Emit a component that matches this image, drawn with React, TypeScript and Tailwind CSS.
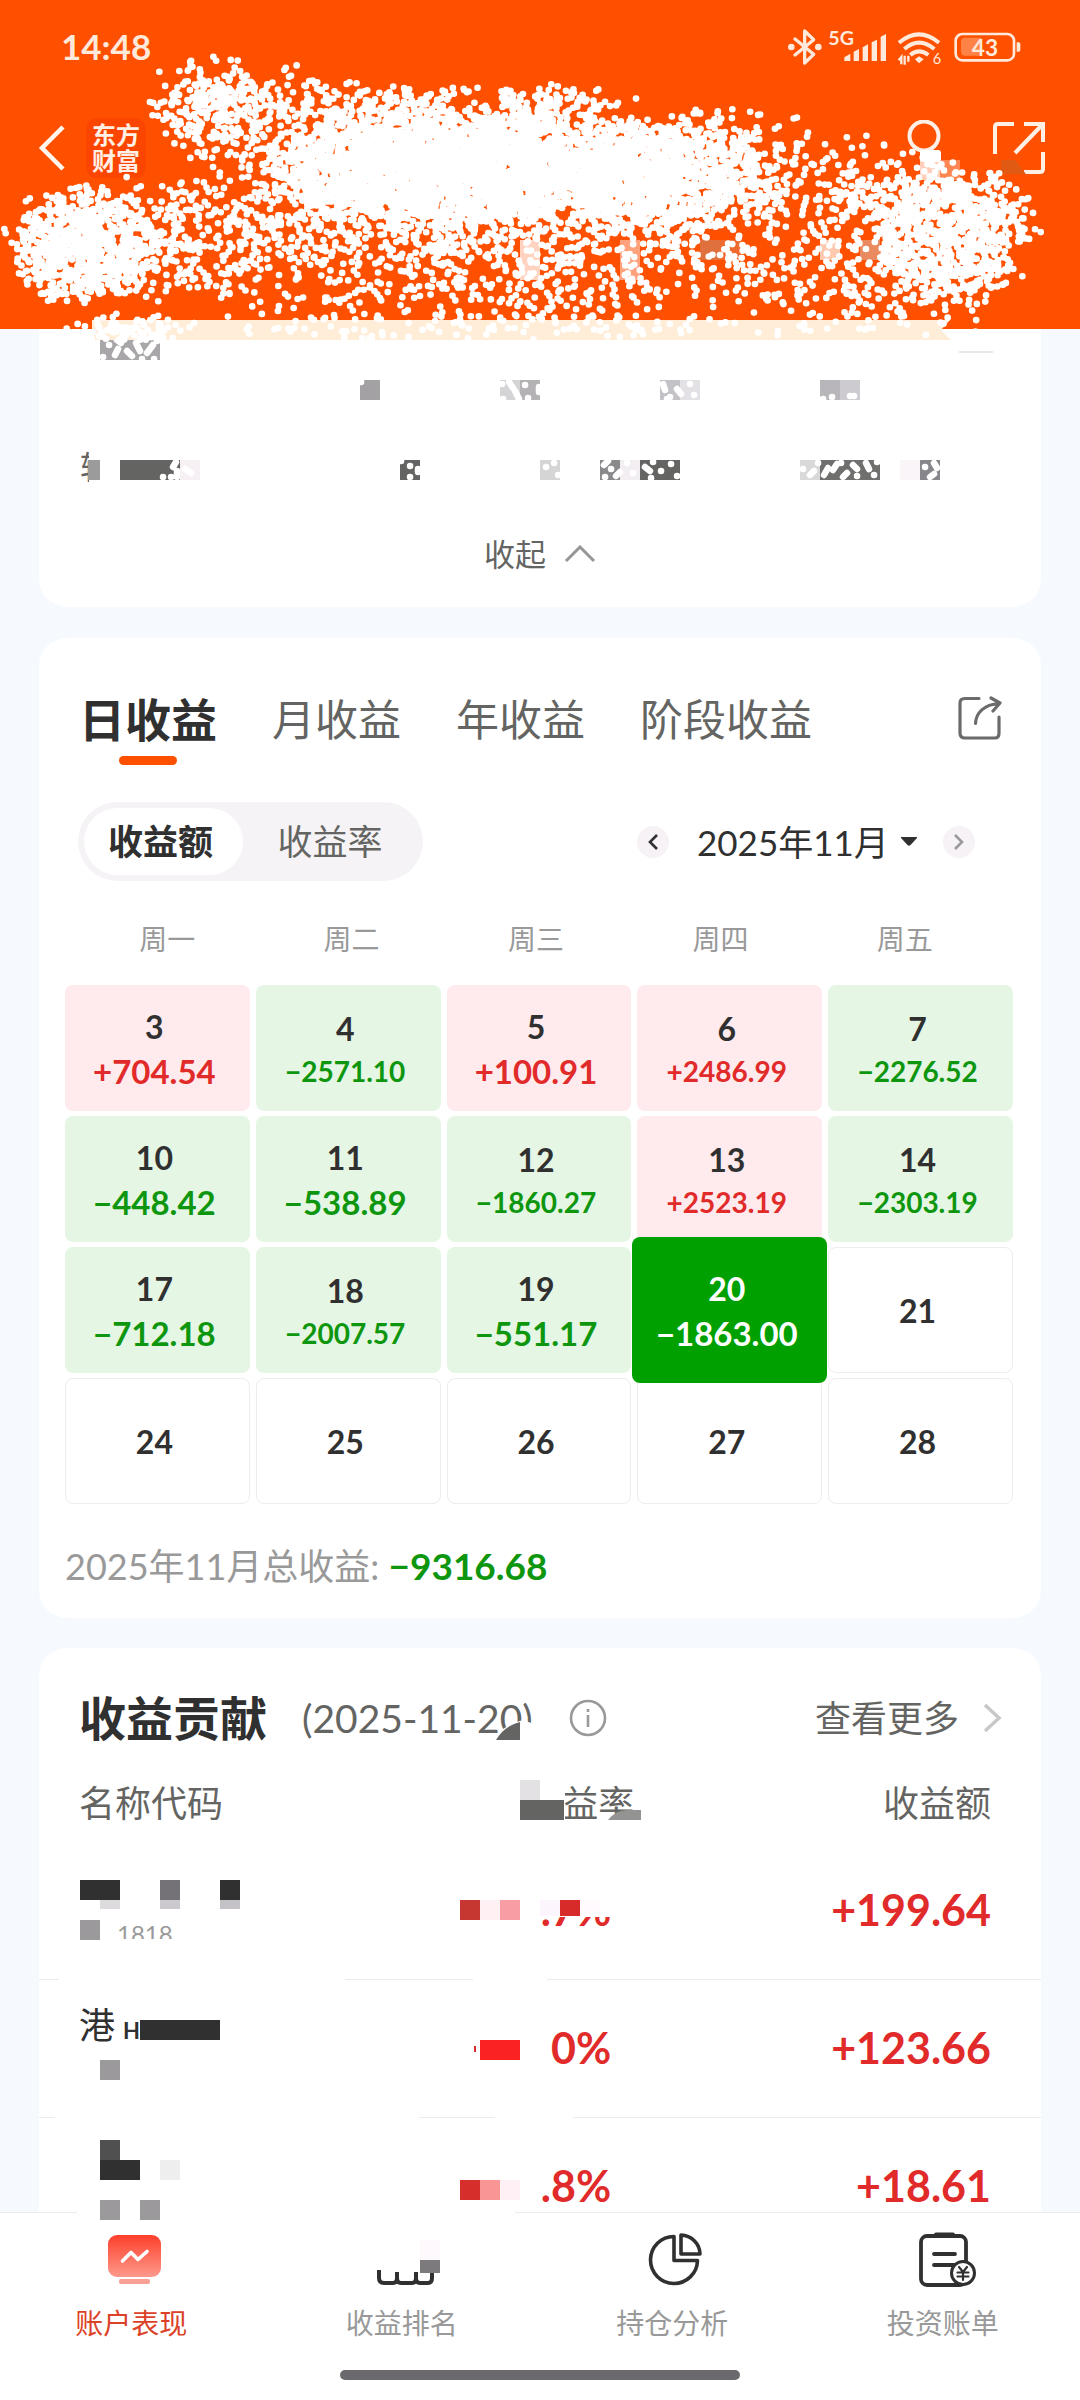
import { useState } from "react";
import clsx from "clsx";

type Block = [x: number, y: number, w: number, h: number, fill: string];

type Day = { day: number; amount?: string };

const DAYS: Day[] = [
  { day: 3, amount: "+704.54" },
  { day: 4, amount: "−2571.10" },
  { day: 5, amount: "+100.91" },
  { day: 6, amount: "+2486.99" },
  { day: 7, amount: "−2276.52" },
  { day: 10, amount: "−448.42" },
  { day: 11, amount: "−538.89" },
  { day: 12, amount: "−1860.27" },
  { day: 13, amount: "+2523.19" },
  { day: 14, amount: "−2303.19" },
  { day: 17, amount: "−712.18" },
  { day: 18, amount: "−2007.57" },
  { day: 19, amount: "−551.17" },
  { day: 20, amount: "−1863.00" },
  { day: 21 },
  { day: 24 },
  { day: 25 },
  { day: 26 },
  { day: 27 },
  { day: 28 },
];

const WEEKDAYS = ["周一", "周二", "周三", "周四", "周五"];
const PERIODS = ["日收益", "月收益", "年收益", "阶段收益"];
const MODES = ["收益额", "收益率"];

// Spray clusters: centre, radii, number of dots
const CLUSTERS = [
  [208, 98, 60, 40, 150],
  [225, 128, 58, 44, 150],
  [270, 95, 90, 28, 80],
  [370, 108, 100, 26, 130],
  [470, 118, 110, 30, 150],
  [565, 108, 72, 24, 110],
  [350, 165, 95, 56, 850],
  [440, 168, 150, 56, 1400],
  [540, 168, 150, 52, 1400],
  [660, 178, 112, 52, 1250],
  [720, 140, 90, 34, 110],
  [850, 190, 100, 50, 190],
  [82, 245, 72, 54, 800],
  [180, 235, 120, 56, 340],
  [380, 225, 150, 44, 340],
  [560, 230, 180, 42, 260],
  [400, 280, 280, 50, 270],
  [640, 285, 260, 50, 230],
  [780, 235, 150, 60, 150],
  [950, 235, 82, 64, 850],
  [930, 190, 50, 20, 70],
  [880, 290, 110, 44, 110],
  [128, 330, 46, 16, 90],
  [500, 330, 440, 14, 90],
];

const spray = (() => {
  let seed = 20251120;
  const rand = () => {
    seed = (seed * 1664525 + 1013904223) % 4294967296;
    return seed / 4294967296;
  };
  let d = "";
  for (const [cx, cy, rx, ry, n] of CLUSTERS) {
    for (let i = 0; i < n; i++) {
      const a = rand() * Math.PI * 2;
      const r = Math.pow(rand(), 0.58) * (0.7 + rand() * 0.5);
      const x = cx + Math.cos(a) * r * rx;
      const y = cy + Math.sin(a) * r * ry;
      if (y < 340) d += `M${x.toFixed(1)} ${y.toFixed(1)}h.1`;
    }
  }
  return d;
})();

const HEADER_BLOCKS: Block[] = [
  [520, 240, 20, 40, "#ffd3bf"],
  [620, 240, 20, 40, "#ffa27c"],
  [700, 240, 20, 20, "#e0713f"],
  [720, 240, 20, 20, "#f06a30"],
  [820, 240, 20, 20, "#ffc9b0"],
  [860, 240, 20, 20, "#e98a61"],
  [920, 160, 20, 20, "#ffcdb8"],
  [940, 160, 20, 20, "#ff8652"],
];

const SUMMARY_BLOCKS: Block[] = [
  [50, 118, 30, 44, "#ffffff"],
  [61, 11, 60, 20, "#a8a6a8"],
  [321, 51, 20, 20, "#a3a1a3"],
  [461, 51, 20, 20, "#d4d3d5"],
  [481, 51, 20, 20, "#b5b2b5"],
  [621, 51, 20, 20, "#c4c2c6"],
  [641, 51, 20, 20, "#e3e1e5"],
  [781, 51, 20, 20, "#b8b6ba"],
  [801, 51, 20, 20, "#cdcbcf"],
  [920, 22, 34, 2, "#e8e8e8"],
  [49, 131, 12, 20, "#9b9b9b"],
  [81, 131, 60, 20, "#646562"],
  [141, 131, 20, 20, "#f6f0f5"],
  [361, 131, 20, 20, "#646562"],
  [501, 131, 20, 20, "#d5d5d5"],
  [561, 131, 20, 20, "#8a898b"],
  [581, 131, 20, 20, "#f3eef2"],
  [601, 131, 40, 20, "#646562"],
  [761, 131, 20, 20, "#d9d9d9"],
  [781, 131, 60, 20, "#6f6f6e"],
  [861, 131, 20, 20, "#faf5f8"],
  [881, 131, 20, 20, "#87868a"],
];

// Points rubbed out of the summary blocks, relative to the card
const SUMMARY_RUBS =
  "M64 28h.1M76 26l3-6M88 22l5 5M97 14l4 8M108 24l6-8M115 30h.1M82 14l-4-3M70 16h.1M103 30h.1M118 12h.1M322 53h.1M463 55h.1M470 53l4 6M476 62l4 8M486 56h.1M489 69h.1M500 58v5M464 70h.1M624 55l2 6M631 68h.1M638 60l4 5M628 70h.1M651 55h.1M655 66h.1M784 70h.1M793 68h.1M811 67h.1M815 67h.1M132 148h.1M124 148h.1M137 133l-3 5M138 142v6M146 140l6 4M371 137h.1M371 148h.1M379 140v3M362 132h.1M507 138h.1M515 134h.1M519 146h.1M565 136l4-4M572 140h.1M566 148h.1M577 147l4-4M588 134h.1M594 144h.1M606 138l5 4M614 133h.1M622 142h.1M632 135h.1M612 149h.1M638 147h.1M764 140h.1M771 146l4-4M779 134h.1M785 146l4-7M794 141l4-6M804 148l4-4M802 134h.1M814 136l4 4M818 147h.1M827 134l3 6M835 146h.1M838 133h.1M886 138h.1M895 134l3 5M891 148l4-3";

const CONTRIB_BLOCKS: Block[] = [
  [458, 130, 68, 44, "#ffffff"],
  [481, 132, 20, 20, "#e4e1e5"],
  [481, 152, 44, 20, "#646562"],
  [41, 232, 40, 20, "#303030"],
  [121, 232, 20, 20, "#747276"],
  [181, 232, 20, 20, "#303030"],
  [61, 252, 20, 9, "#dedbdf"],
  [121, 252, 20, 9, "#cbc9cd"],
  [181, 252, 20, 9, "#c4c2c6"],
  [41, 272, 20, 20, "#9c999c"],
  [74, 291, 66, 8, "#ffffff"],
  [500, 236, 76, 33, "#ffffff"],
  [421, 252, 20, 20, "#c63732"],
  [441, 252, 20, 20, "#fff1f3"],
  [461, 252, 20, 20, "#f89da4"],
  [501, 252, 20, 16, "#fdf5fd"],
  [521, 252, 20, 16, "#d62b29"],
  [541, 252, 20, 14, "#fffafe"],
  [101, 372, 80, 20, "#303030"],
  [61, 412, 20, 20, "#9c999c"],
  [435, 398, 2, 6, "#d9302e"],
  [441, 392, 40, 20, "#fa2222"],
  [61, 492, 20, 20, "#505050"],
  [61, 512, 40, 20, "#303030"],
  [121, 512, 20, 20, "#eeeeee"],
  [421, 532, 20, 20, "#d62f2b"],
  [441, 532, 20, 20, "#f99595"],
  [461, 532, 20, 20, "#fff0f5"],
  [20, 329, 286, 4, "#ffffff"],
  [434, 329, 74, 4, "#ffffff"],
  [16, 467, 364, 4, "#ffffff"],
  [456, 467, 78, 4, "#ffffff"],
];

const HOLDINGS = [
  { code: "1818", rate: ".7%", amount: "+199.64" },
  { name: "港", tail: "H", rate: "0%", amount: "+123.66" },
  { rate: ".8%", amount: "+18.61" },
];

export default function App() {
  return (
    <div className="flex h-screen min-h-[600px] flex-col overflow-hidden bg-[#f6faff] font-[Lato,'Noto_Sans_CJK_SC',sans-serif] text-[#303030]">
      <Header />
      <main className="min-h-0 flex-1 overflow-y-auto px-[39px] [scrollbar-width:none]">
        <SummaryCard />
        <CalendarCard />
        <ContributionCard />
      </main>
      <BottomNav />
    </div>
  );
}

function Blocks({ items }: { items: Block[] }) {
  return (
    <>
      {items.map(([x, y, w, h, fill]) => (
        <rect key={`${x}-${y}-${w}`} x={x} y={y} width={w} height={h} fill={fill} />
      ))}
    </>
  );
}

function Header() {
  return (
    <header className="relative z-10 h-[329px] shrink-0 bg-[#ff5000] text-white">
      <StatusBar />
      <div className="flex h-[112px] items-center pr-[35px] pl-[37px]">
        <button type="button" aria-label="返回">
          <svg width="30" height="48" viewBox="0 0 30 48" fill="none" stroke="#fff6f0" strokeWidth="4.5">
            <path d="M26 3 5 24l21 21" />
          </svg>
        </button>
        <div className="ml-[19px] flex h-[60px] w-[60px] flex-col items-center justify-center rounded-[10px] bg-[#fc4600] text-[24px] leading-[26px] font-bold text-[#fff0e6]">
          <span>东方</span>
          <span>财富</span>
        </div>
        <button type="button" aria-label="客服" className="ml-auto">
          <svg width="34" height="56" viewBox="0 0 34 56" fill="none">
            <circle cx="17" cy="16" r="14.5" stroke="#ffefe6" strokeWidth="4" />
          </svg>
        </button>
        <button type="button" aria-label="分享" className="ml-[52px]">
          <svg width="52" height="52" viewBox="0 0 52 52" fill="none" stroke="#fff0e6" strokeWidth="4">
            <path d="M2 32V5q0-3 3-3h16M31 2h19v18M49 3 22 31M50 30v17q0 3-3 3H31" />
            <path d="M8 38h14l14 18H8z" fill="#e05a14" stroke="none" />
          </svg>
        </button>
      </div>
      <svg viewBox="0 0 1080 346" className="pointer-events-none absolute top-0 left-0 w-full" aria-hidden="true">
        <path d="M92 320h858l-9 10 10 10H92z" fill="#ffedd8" />
        <Blocks items={HEADER_BLOCKS} />
        <path d={spray} stroke="#fff" strokeWidth="6.6" strokeLinecap="round" />
        <rect x="920" y="150" width="21" height="12" rx="3" fill="#fff" />
      </svg>
    </header>
  );
}

function StatusBar() {
  return (
    <div className="flex h-[92px] items-center justify-between pr-[58px] pl-[61px] text-[#ffe9da]">
      <time className="text-[35px] leading-[40px] font-bold">14:48</time>
      <div className="flex items-center gap-[5px]">
        <svg width="36" height="39" viewBox="80 46 108 117" fill="none" stroke="currentColor" strokeWidth="10" strokeLinejoin="round" strokeLinecap="round">
          <path d="m104 82 56 46-27 26V58l27 26-56 46" />
          <circle cx="93" cy="106" r="5" fill="currentColor" />
          <circle cx="174" cy="106" r="5" fill="currentColor" />
        </svg>
        <svg width="64" height="39" viewBox="203 46 192 117" fill="currentColor">
          <text x="204" y="101" fontSize="59" fontWeight="700">
            5G
          </text>
          <path d="m252 137 18-11v22h-18zM280 120l16-8v36h-16zM307 107l16-9v50h-16zM334 92l16-8v64h-16zM361 75l16-8v81h-16z" />
        </svg>
        <svg width="51" height="39" viewBox="410 46 153 117" fill="none" stroke="currentColor" strokeWidth="12">
          <path d="M416 93q60-50 120 0M432 112q44-38 90 0M450 130q26-22 54 0" />
          <path d="m464 143 12-9 14 9-14 12z" fill="currentColor" stroke="none" />
          <path d="M423 158v-22l-8 10M433 132v27M444 132v18" strokeWidth="7" />
          <text x="517" y="156" fontSize="44" fill="currentColor" stroke="none">
            6
          </text>
        </svg>
        <svg width="69" height="39" viewBox="578 46 207 117">
          <rect x="586" y="67" width="175" height="79" rx="20" fill="none" stroke="currentColor" strokeWidth="8" />
          <path d="M614 78h49v54h-49q-12 0-12-12V90q0-12 12-12z" fill="#ff8247" />
          <path d="M769 92h6q5 0 5 6v16q0 6-5 6h-6z" fill="currentColor" />
          <text x="674" y="132" fontSize="68" fontWeight="700" textAnchor="middle" fill="currentColor">
            43
          </text>
        </svg>
      </div>
    </div>
  );
}

function SummaryCard() {
  return (
    <section className="relative flex h-[278px] flex-col rounded-b-[28px] bg-white">
      <div className="mt-[118px] ml-[41px] text-[32px] leading-[40px] text-[#646562]">转</div>
      <button type="button" className="mx-auto mt-[43px] flex items-center gap-[18px] text-[31px] leading-[48px] text-[#646562]">
        收起
        <svg width="32" height="18" viewBox="0 0 32 18" fill="none" stroke="#969696" strokeWidth="3">
          <path d="M2 16 16 2l14 14" />
        </svg>
      </button>
      <svg viewBox="0 0 1002 278" className="pointer-events-none absolute top-0 left-0 w-full" aria-hidden="true">
        <Blocks items={SUMMARY_BLOCKS} />
        <path d={SUMMARY_RUBS} stroke="#fff" strokeWidth="6.5" strokeLinecap="round" fill="none" />
      </svg>
    </section>
  );
}

function CalendarCard() {
  const [period, setPeriod] = useState(PERIODS[0]);
  const [mode, setMode] = useState(MODES[0]);
  const [selected, setSelected] = useState(20);

  return (
    <section className="mt-[31px] rounded-[28px] bg-white pt-[48px] pb-[26px]">
      <div className="flex h-[79px] items-start gap-[55px] pr-[39px] pl-[40px]">
        {PERIODS.map((p) => (
          <button
            key={p}
            type="button"
            onClick={() => setPeriod(p)}
            className={clsx(
              "flex flex-col items-center gap-[2px] leading-[68px]",
              p === period ? "text-[46px] font-bold" : "text-[43px] text-[#646562]",
            )}
          >
            {p}
            {p === period && <span className="h-[9px] w-[58px] rounded-full bg-[#ff5000]" />}
          </button>
        ))}
        <button type="button" aria-label="分享收益" className="mt-[10px] ml-auto">
          <svg width="44" height="44" viewBox="0 0 44 44" fill="none" stroke="#6b6b6b" strokeWidth="3.2" strokeLinecap="round" strokeLinejoin="round">
            <path d="M21 2.5H7Q2 2.5 2 7v30q0 5 5 5h30q4 0 4-5V21M17.5 27.5C18 17 26 8.5 41 7.5M33 2l9 5-7 8" />
          </svg>
        </button>
      </div>

      <div className="mt-[37px] flex items-center justify-between pr-[66px] pl-[39px]">
        <div className="flex h-[79px] items-center rounded-full bg-[#f6f3f7] px-[6px]">
          {MODES.map((m) => (
            <button
              key={m}
              type="button"
              onClick={() => setMode(m)}
              className={clsx(
                "h-[67px] rounded-full text-[35px]",
                m === mode ? "w-[159px] bg-white pr-[6px] font-bold" : "w-[174px] text-[#646562]",
              )}
            >
              {m}
            </button>
          ))}
        </div>
        <div className="flex items-center gap-[26px]">
          <button type="button" aria-label="上个月" className="flex h-[32px] w-[32px] items-center justify-center rounded-full bg-[#f6f2f6]">
            <svg width="10" height="16" viewBox="0 0 10 16" fill="none" stroke="#303030" strokeWidth="2.6">
              <path d="M9 1 2 8l7 7" />
            </svg>
          </button>
          <div className="relative flex items-center">
            <select
              aria-label="月份"
              className="h-[60px] w-[222px] appearance-none bg-transparent pl-[2px] text-[35px] leading-[60px] outline-none"
            >
              <option>2025年11月</option>
            </select>
            <svg width="16" height="9" viewBox="0 0 16 9" fill="#303030" className="pointer-events-none absolute right-0">
              <path d="M0 0h16v1L9.5 8q-1.5 1.4-3 0L0 1z" />
            </svg>
          </div>
          <button type="button" aria-label="下个月" className="flex h-[32px] w-[32px] items-center justify-center rounded-full bg-[#f6f2f6]">
            <svg width="10" height="16" viewBox="0 0 10 16" fill="none" stroke="#9a9a9a" strokeWidth="2.6">
              <path d="m1 1 7 7-7 7" />
            </svg>
          </button>
        </div>
      </div>

      <div className="mt-[38px] mr-[44px] mb-[26px] ml-[36px] grid grid-cols-5 text-center text-[28px] leading-[40px] text-[#999999]">
        {WEEKDAYS.map((w) => (
          <span key={w}>{w}</span>
        ))}
      </div>

      <div className="mr-[28px] ml-[26px] grid auto-rows-[126px] grid-cols-5 gap-x-[6px] gap-y-[5px]">
        {DAYS.map((d) => (
          <DayCell key={d.day} {...d} selected={d.day === selected} onSelect={() => setSelected(d.day)} />
        ))}
      </div>

      <p className="mt-[36px] ml-[26px] text-[36px] leading-[52px] text-[#999999]">
        2025年11月总收益: <strong className="text-[37px] leading-none font-bold text-[#0f960f]">−9316.68</strong>
      </p>
    </section>
  );
}

function DayCell({ day, amount, selected, onSelect }: Day & { selected: boolean; onSelect: () => void }) {
  const gain = amount?.startsWith("+");
  const small = !selected && amount !== undefined && amount.length > 7;
  return (
    <button
      type="button"
      onClick={onSelect}
      className={clsx(
        "flex flex-col items-center justify-center rounded-[8px] pt-[2px] pr-[6px] font-bold",
        !amount && "border border-[#ededed]",
        amount && !selected && (gain ? "bg-[#ffeaed]" : "bg-[#e5f6e5]"),
        selected && "z-10 -mx-[5px] -my-[10px] bg-[#00a000] text-white",
      )}
    >
      <span className="text-[32px] leading-[44px]">{day}</span>
      {amount && (
        <span
          className={clsx(
            small ? "text-[28px] leading-[40px]" : "text-[33px] leading-[44px]",
            !selected && (gain ? "text-[#e12a2a]" : "text-[#0f960f]"),
          )}
        >
          {amount}
        </span>
      )}
    </button>
  );
}

function ContributionCard() {
  return (
    <section className="relative mt-[30px] rounded-t-[28px] bg-white">
      <div className="flex h-[116px] items-center pt-[24px] pr-[38px] pl-[40px]">
        <h2 className="text-[47px] leading-[68px] font-bold">收益贡献</h2>
        <span className="ml-[35px] text-[39px] text-[#646562]">(2025-11-20)</span>
        <svg width="40" height="40" viewBox="0 0 40 40" fill="none" stroke="#999" strokeWidth="2.6" className="ml-[35px]">
          <circle cx="20" cy="20" r="17" />
          <path d="M20 17v12M20 11v3" />
        </svg>
        <a href="#more" className="ml-auto flex items-center gap-[24px] text-[36px] text-[#646562]">
          查看更多
          <svg width="20" height="30" viewBox="0 0 20 30" fill="none" stroke="#c8c8c8" strokeWidth="3.5">
            <path d="m2 2 14 13L2 28" />
          </svg>
        </a>
      </div>
      <table className="w-full table-fixed">
        <thead>
          <tr className="h-[77px] text-[36px] text-[#646562]">
            <th className="w-[30%] pl-[40px] text-left font-normal">名称代码</th>
            <th className="w-[30%] pr-[6px] text-right font-normal">收益率</th>
            <th className="pr-[50px] text-right font-normal">收益额</th>
          </tr>
        </thead>
        <tbody>
          {HOLDINGS.map((h) => (
            <tr key={h.amount} className="h-[138px] border-b border-[#ebebeb] text-[43px] font-bold text-[#e12a2a]">
              <td className="pl-[40px] text-[36px] font-normal text-[#303030]">
                {h.code && <div className="mt-[48px] ml-[38px] text-[24px] leading-[32px] text-[#9a9a9a]">{h.code}</div>}
                {h.name && (
                  <div className="mb-[46px] flex items-end leading-[44px]">
                    {h.name}
                    <span className="ml-[8px] text-[22px] leading-[32px] font-bold">{h.tail}</span>
                  </div>
                )}
              </td>
              <td className="pr-[29px] text-right">{h.rate}</td>
              <td className="pr-[50px] text-right">{h.amount}</td>
            </tr>
          ))}
        </tbody>
      </table>
      <svg viewBox="0 0 1002 560" className="pointer-events-none absolute top-0 left-0 w-full" aria-hidden="true">
        <path d="M452 96q8-18 32-24l22 8v16z" fill="#fff" />
        <path d="M457 92q8-14 24-18v18z" fill="#646562" />
        <Blocks items={CONTRIB_BLOCKS} />
        <path d="M569 172q8-10 19-10h14v10z" fill="#939392" />
      </svg>
    </section>
  );
}

const NAV = [
  { label: "账户表现", icon: <AccountIcon /> },
  { label: "收益排名", icon: <RankIcon /> },
  { label: "持仓分析", icon: <PieIcon /> },
  { label: "投资账单", icon: <BillIcon /> },
];

function BottomNav() {
  return (
    <nav className="relative z-10 h-[188px] shrink-0 border-t border-[#ebebeb] bg-white">
      <div className="-ml-[4px] grid grid-cols-4 pr-[2px]">
        {NAV.map((item, i) => (
          <a
            key={item.label}
            href={`#tab-${i}`}
            className={clsx(
              "flex flex-col items-center pt-[16px] text-[28px] leading-[40px]",
              i === 0 ? "text-[#dc4228]" : "text-[#999999]",
            )}
          >
            {item.icon}
            <span className="mt-[14px]">{item.label}</span>
          </a>
        ))}
      </div>
      <div className="mx-auto mt-[27px] h-[10px] w-[37%] rounded-full bg-[#6b696d]" />
      <svg viewBox="0 0 1080 84" className="pointer-events-none absolute -top-[14px] left-0 w-full" aria-hidden="true">
        <rect x="77" y="12" width="438" height="4" fill="#fff" />
        <rect x="100" y="1" width="20" height="20" fill="#9c999c" />
        <rect x="140" y="1" width="20" height="20" fill="#9c999c" />
        <rect x="420" y="41" width="20" height="20" fill="#fdf9fd" />
        <rect x="420" y="61" width="20" height="13" fill="#7c7a7d" />
      </svg>
    </nav>
  );
}

function AccountIcon() {
  return (
    <svg width="60" height="60" viewBox="0 0 60 60" fill="none">
      <defs>
        <linearGradient id="account" x1="0" y1="0" x2="0" y2="1">
          <stop offset="0" stopColor="#fd3f2b" />
          <stop offset="1" stopColor="#fd9a8c" />
        </linearGradient>
      </defs>
      <rect x="7" y="6" width="53" height="42" rx="9" fill="url(#account)" />
      <rect x="18" y="50" width="31" height="5" rx="2" fill="#f7a093" />
      <path d="m21.5 32 8.5-8.5 7 7 9-8" stroke="#fff" strokeWidth="3.6" strokeLinecap="round" strokeLinejoin="round" />
    </svg>
  );
}

function RankIcon() {
  return (
    <svg width="64" height="60" viewBox="0 0 64 60" fill="none" stroke="#303030" strokeWidth="4">
      <path d="M9 41v8q0 5 5 5h9q4 0 4-5v-6M27 49q0 5 4 5h11q4 0 4-5v-6M46 49q0 5 4 5h8q4 0 4-5v-7" />
    </svg>
  );
}

function PieIcon() {
  return (
    <svg width="60" height="60" viewBox="0 0 60 60" fill="none" stroke="#303030" strokeWidth="3.6" strokeLinejoin="round">
      <path d="M32 7.5A23.5 23.5 0 1 0 55.5 31.5H32z" />
      <path d="M39 6v19h19A19.5 19.5 0 0 0 39 6z" />
    </svg>
  );
}

function BillIcon() {
  return (
    <svg width="66" height="60" viewBox="0 0 66 60" fill="none" stroke="#303030" strokeWidth="3.8" strokeLinecap="round">
      <rect x="11" y="7" width="45" height="49" rx="6" />
      <path d="M26 5.5h17" strokeWidth="4" />
      <path d="M24 25h21M24 36h20" />
      <circle cx="53" cy="44" r="11.5" fill="#fff" strokeWidth="3" />
      <path d="m49 38 4 5 4-5M53 43v8M47.5 43.5h11M47.5 47.5h11" strokeWidth="2.2" />
    </svg>
  );
}
